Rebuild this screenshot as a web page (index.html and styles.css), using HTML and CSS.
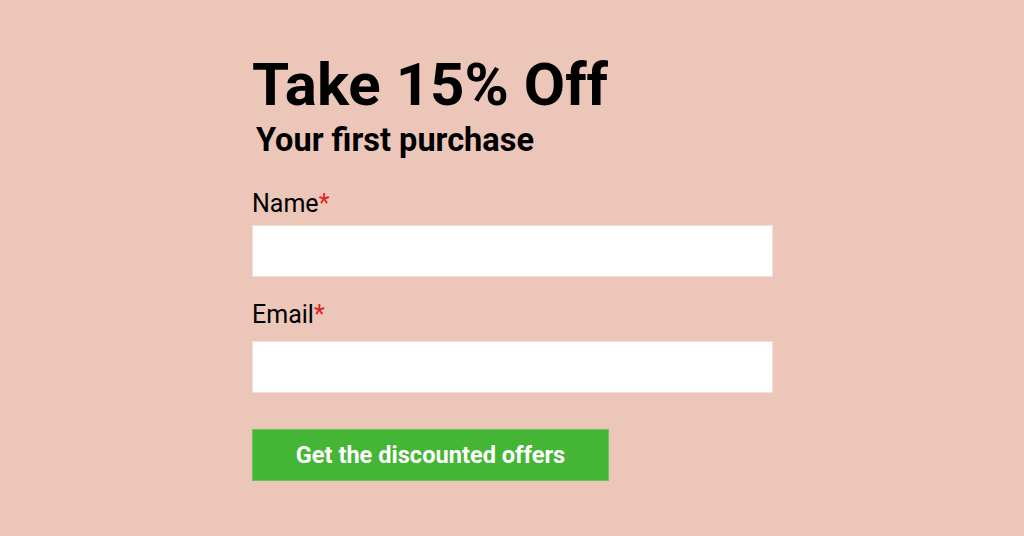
FILE: index.html
```html
<!DOCTYPE html>
<html>
<head>
<meta charset="utf-8">
<link rel="stylesheet" href="styles.css">
</head>
<body>
<form class="offer">
  <h1 class="title">Take 15% Off</h1>
  <h2 class="subtitle">Your first purchase</h2>
  <label class="label label-name">Name<span class="req">*</span></label>
  <input class="field field-name" type="text">
  <label class="label label-email">Email<span class="req">*</span></label>
  <input class="field field-email" type="email">
  <button class="submit" type="button">Get the discounted offers</button>
</form>
</body>
</html>
```
FILE: styles.css
```css
html, body {
  margin: 0;
  padding: 0;
  height: 100%;
}
body {
  background: #ecc6b8;
  font-family: Roboto, "Liberation Sans", sans-serif;
  color: #000;
  overflow: hidden;
}
.offer {
  display: flex;
  flex-direction: column;
  align-items: flex-start;
  width: 521px;
  margin-left: 252px;
  padding-top: 55px;
}
.title {
  margin: 0;
  font-size: 60px;
  line-height: 60px;
  font-weight: 700;
}
.subtitle {
  margin: 9px 0 0 4px;
  font-size: 32.5px;
  line-height: 32px;
  font-weight: 700;
}
.label {
  display: block;
  font-size: 25px;
  line-height: 25px;
  font-weight: 400;
}
.label-name {
  margin-top: 35px;
}
.label-email {
  margin-top: 25px;
}
.req {
  color: #e41f1f;
}
.field {
  display: block;
  box-sizing: border-box;
  width: 521px;
  height: 52px;
  border: 1px solid #f3ded6;
  background: #fff;
  margin: 9px 0 0 0;
  padding: 0 12px;
  font: inherit;
}
.field-email {
  margin-top: 14px;
}
.submit {
  margin-top: 36px;
  width: 357px;
  height: 52px;
  border: 1px solid #6cc262;
  background: #44b534;
  color: #fff;
  font-family: Roboto, "Liberation Sans", sans-serif;
  font-size: 23.6px;
  font-weight: 700;
  padding: 0;
  cursor: pointer;
}
```
